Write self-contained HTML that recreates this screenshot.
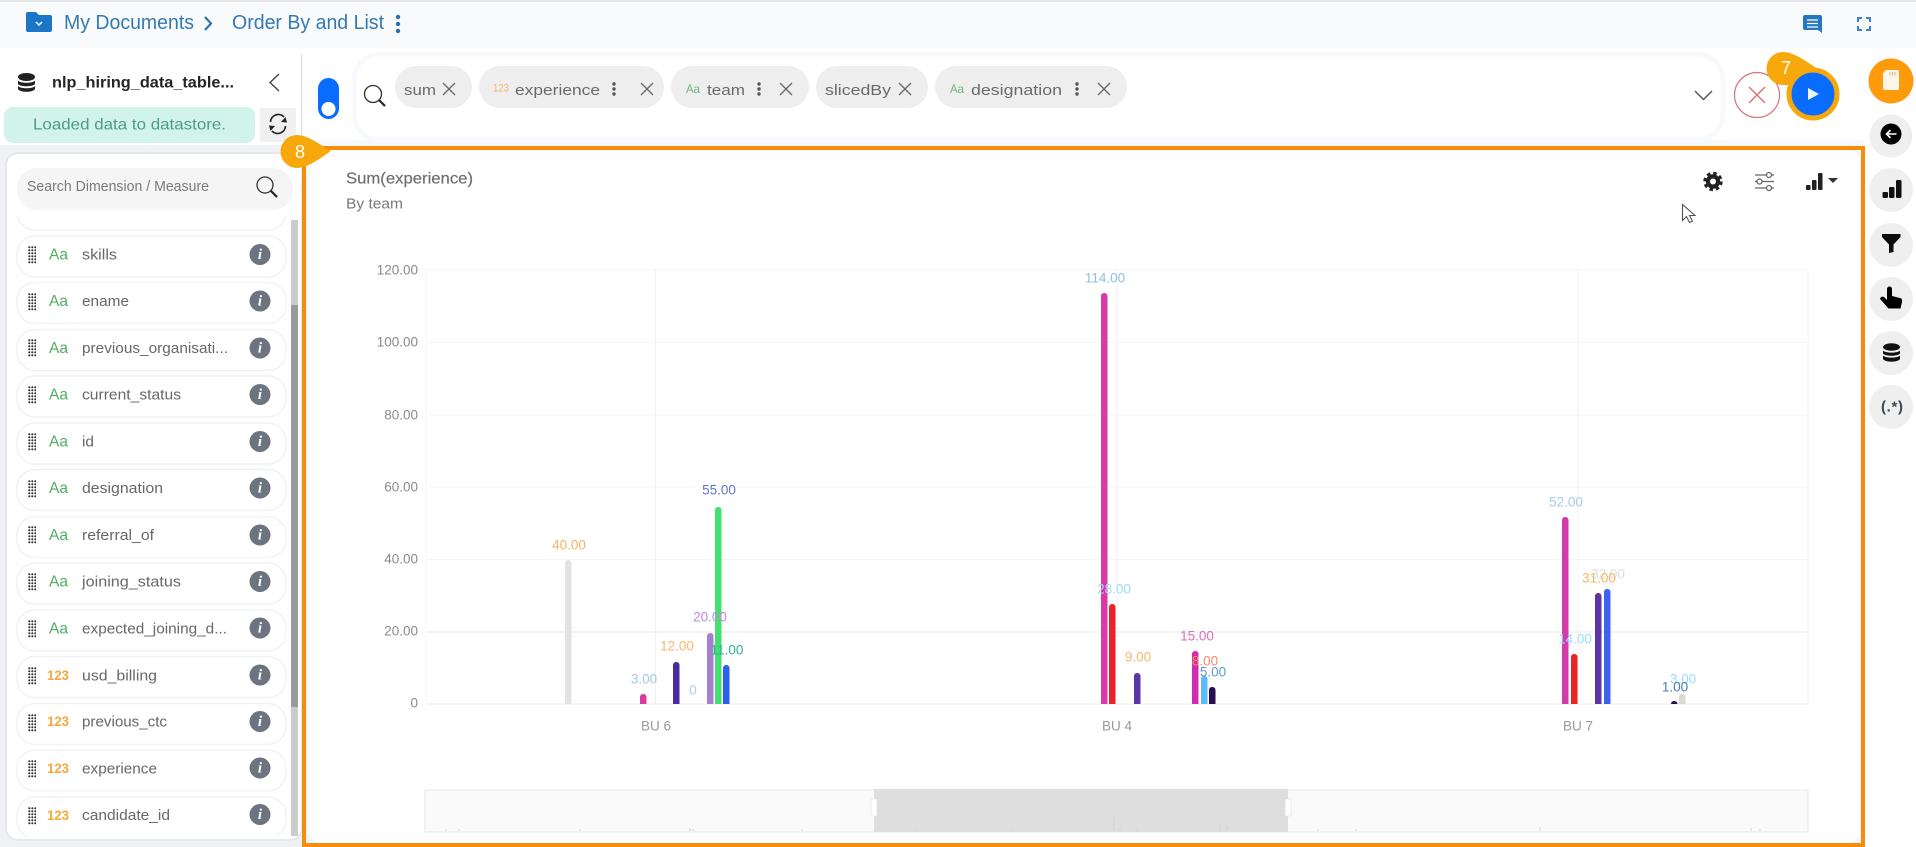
<!DOCTYPE html>
<html lang="en"><head><meta charset="utf-8"><title>Order By and List</title>
<style>
html,body{margin:0;padding:0;background:#fff;width:1916px;height:847px;overflow:hidden}
svg{display:block;filter:blur(.35px)}
text{font-family:"Liberation Sans",sans-serif;dominant-baseline:central}
.lab{font-size:13.5px;text-anchor:middle}
.ax{font-size:13.5px;fill:#8a8a8a;text-anchor:end}
.xl{font-size:13.5px;fill:#999;text-anchor:middle}
.rt{font-size:15px;fill:#676767}
.aa{font-size:16px;fill:#4fae62}
.n{font-size:14px;font-weight:700;fill:#f5a83a}
.ch{font-size:15px;fill:#6a6a6a}
.row{fill:#fff;stroke:#f1f2f4;stroke-width:1.5}
</style></head><body>
<svg width="1916" height="847" viewBox="0 0 1916 847" xmlns="http://www.w3.org/2000/svg">
<defs>
<clipPath id="plot"><rect x="420" y="200" width="1400" height="504"/></clipPath>
<clipPath id="list"><rect x="10" y="216" width="280" height="620"/></clipPath>
<pattern id="dots" width="3" height="3" patternUnits="userSpaceOnUse"><circle cx="1.3" cy="1.3" r="1.05" fill="#2e2e2e"/></pattern>
<g id="info"><circle cx="0" cy="0" r="10.5" fill="#6b747f"/><text x="0" y="0.5" text-anchor="middle" style="font-size:15px;font-weight:700;font-style:italic;font-family:'Liberation Serif',serif" fill="#fff">i</text></g>
<path id="x" d="M-6 -6L6 6M6 -6L-6 6" stroke="#666" stroke-width="1.3" fill="none"/>
<g id="keb"><circle cx="0" cy="-5" r="1.7" fill="#555"/><circle cx="0" cy="0" r="1.7" fill="#555"/><circle cx="0" cy="5" r="1.7" fill="#555"/></g>
<rect id="drag" x="0" y="0" width="8" height="18" fill="url(#dots)"/>
</defs>

<rect width="1916" height="847" fill="#fff"/>
<!-- top bar -->
<rect width="1916" height="48" fill="#f9fafb"/>
<rect width="1916" height="2" fill="#e3e4e6"/>
<path d="M28 12h8l3 3h11a2 2 0 0 1 2 2v13a2 2 0 0 1-2 2H28a2 2 0 0 1-2-2V14a2 2 0 0 1 2-2z" fill="#1a76c6"/>
<path d="M36 22l3 3 3-3" stroke="#fff" stroke-width="1.5" fill="none"/>
<text x="64" y="23" style="font-size:20px" fill="#3579b3" textLength="130" lengthAdjust="spacingAndGlyphs">My Documents</text>
<path d="M205 17l6 6.5-6 6.5" stroke="#2d72ad" stroke-width="2.2" fill="none"/>
<text x="232" y="23" style="font-size:20px" fill="#3579b3" textLength="152" lengthAdjust="spacingAndGlyphs">Order By and List</text>
<circle cx="398" cy="17" r="2.2" fill="#2a6fa8"/><circle cx="398" cy="24" r="2.2" fill="#2a6fa8"/><circle cx="398" cy="31" r="2.2" fill="#2a6fa8"/>
<path d="M1805 15h15a2 2 0 0 1 2 2v13.500l0 2.500-4-3h-13a2 2 0 0 1-2-2V17a2 2 0 0 1 2-2z" fill="#2578bd"/>
<path d="M1807 20h11M1807 23.500h11M1807 27h11" stroke="#fff" stroke-width="1.3"/>
<path d="M1858 22v-4h4M1866 18h4v4M1870 26v4h-4M1862 30h-4v-4" stroke="#3a80bf" stroke-width="2" fill="none"/>

<!-- left header -->
<rect x="301" y="54" width="1.2" height="92" fill="#dedede"/>
<g fill="#222"><ellipse cx="26.500" cy="77" rx="8.500" ry="4"/><path d="M18 80.500c2 3 15 3 17 0v3.500c-2 3-15 3-17 0z"/><path d="M18 86c2 3 15 3 17 0v3c-2 3.800-15 3.800-17 0z"/></g>
<text x="52" y="83" style="font-size:16px;font-weight:700" fill="#252525" textLength="182" lengthAdjust="spacingAndGlyphs">nlp_hiring_data_table...</text>
<path d="M279 74l-9 8.500 9 8.500" stroke="#444" stroke-width="1.4" fill="none"/>
<rect x="4" y="107" width="251" height="36" rx="9" fill="#d2f3e9"/>
<text x="33" y="125" style="font-size:16px" fill="#4f9c84" textLength="193" lengthAdjust="spacingAndGlyphs">Loaded data to datastore.</text>
<rect x="260" y="108" width="36" height="34" fill="#f0f0f0"/>
<path d="M270.500 122a7.800 7.800 0 0 1 13.500-5M285.500 126a7.800 7.800 0 0 1-13.500 5" stroke="#222" stroke-width="1.7" fill="none"/>
<path d="M287 122.500l-6-.5 4.500-5zM269 125.500l6 .5-4.500 5z" fill="#222"/>

<!-- query bar -->
<rect x="314" y="140" width="1550" height="8" fill="#f7f8fb"/>
<rect x="354" y="54" width="1369" height="86" rx="26" fill="#fff" stroke="#f7f9fc" stroke-width="5"/>
<rect x="318" y="78" width="21" height="41" rx="10.500" fill="#0a6cff"/>
<circle cx="328.500" cy="109" r="7" fill="#fff"/>
<circle cx="373" cy="94" r="8.500" fill="none" stroke="#333" stroke-width="1.3"/>
<path d="M379 100l6 6" stroke="#222" stroke-width="2.200"/>

<g fill="#eeeeee">
<rect x="395" y="66" width="77" height="42" rx="21"/>
<rect x="479" y="66" width="185" height="42" rx="21"/>
<rect x="671" y="66" width="138" height="42" rx="21"/>
<rect x="816" y="66" width="112" height="42" rx="21"/>
<rect x="935" y="66" width="192" height="42" rx="21"/>
</g>
<text class="ch" x="404" y="90.500" textLength="32" lengthAdjust="spacingAndGlyphs">sum</text>
<use href="#x" x="449" y="89"/>
<text x="493" y="88.500" style="font-size:11px" fill="#f5b56a" textLength="16" lengthAdjust="spacingAndGlyphs">123</text>
<text class="ch" x="515" y="90.500" textLength="85" lengthAdjust="spacingAndGlyphs">experience</text>
<use href="#keb" x="614" y="89"/><use href="#x" x="647" y="89"/>
<text x="686" y="89" style="font-size:12px" fill="#74b184" textLength="14" lengthAdjust="spacingAndGlyphs">Aa</text>
<text class="ch" x="707" y="90.500" textLength="38" lengthAdjust="spacingAndGlyphs">team</text>
<use href="#keb" x="759" y="89"/><use href="#x" x="786" y="89"/>
<text class="ch" x="825" y="90.500" textLength="66" lengthAdjust="spacingAndGlyphs">slicedBy</text>
<use href="#x" x="905" y="89"/>
<text x="950" y="89" style="font-size:12px" fill="#74b184" textLength="14" lengthAdjust="spacingAndGlyphs">Aa</text>
<text class="ch" x="971" y="90.500" textLength="91" lengthAdjust="spacingAndGlyphs">designation</text>
<use href="#keb" x="1077" y="89"/><use href="#x" x="1104" y="89"/>
<path d="M1695 91l8.500 8.500 8.500-8.500" stroke="#555" stroke-width="1.400" fill="none"/>

<!-- cancel and run -->
<circle cx="1757" cy="95" r="22.500" fill="#fff" stroke="#d9757c" stroke-width="1.200"/>
<path d="M1749 87l16 16M1765 87l-16 16" stroke="#d9757c" stroke-width="1.500"/>
<path d="M1783 52C1795 52 1810 64 1822 72L1800 82C1795 85 1790 85 1783 85A16.500 16.500 0 0 1 1783 52Z" fill="#f7a90b"/>
<circle cx="1813" cy="94" r="24" fill="#0a6cff" stroke="#f7a90b" stroke-width="5"/>
<path d="M1808 88v12l11-6z" fill="#eef5ff"/>
<text x="1786" y="68" text-anchor="middle" style="font-size:18px" fill="#fff">7</text>

<!-- left panel -->
<rect x="0" y="145" width="303" height="702" fill="#f0f1f5"/>
<rect x="6" y="153" width="296" height="687" rx="12" fill="#fff" stroke="#e0e2ea" stroke-width="1.500"/>
<rect x="17" y="168" width="276" height="42" rx="20" fill="#f5f5f5"/>
<text x="27" y="187" style="font-size:14.500px" fill="#7a7a7a" textLength="182" lengthAdjust="spacingAndGlyphs">Search Dimension / Measure</text>
<circle cx="265" cy="185" r="8" fill="none" stroke="#333" stroke-width="1.300"/>
<path d="M271 191l6 6" stroke="#222" stroke-width="2.200"/>
<rect x="291" y="220" width="7" height="616" fill="#cccccc"/>
<rect x="291" y="305" width="7" height="402" fill="#9a9a9a"/>

<g clip-path="url(#list)">
<rect class="row" x="17" y="189" width="269" height="41" rx="18"/>
<rect class="row" x="17" y="236" width="269" height="41" rx="18"/>
<rect class="row" x="17" y="282.500" width="269" height="41" rx="18"/>
<rect class="row" x="17" y="329.500" width="269" height="41" rx="18"/>
<rect class="row" x="17" y="376" width="269" height="41" rx="18"/>
<rect class="row" x="17" y="423" width="269" height="41" rx="18"/>
<rect class="row" x="17" y="469.500" width="269" height="41" rx="18"/>
<rect class="row" x="17" y="516.500" width="269" height="41" rx="18"/>
<rect class="row" x="17" y="563" width="269" height="41" rx="18"/>
<rect class="row" x="17" y="610" width="269" height="41" rx="18"/>
<rect class="row" x="17" y="656.500" width="269" height="41" rx="18"/>
<rect class="row" x="17" y="703.500" width="269" height="41" rx="18"/>
<rect class="row" x="17" y="750" width="269" height="41" rx="18"/>
<rect class="row" x="17" y="797" width="269" height="41" rx="18"/>
</g>
<use href="#drag" x="28" y="246"/><use href="#drag" x="28" y="293"/><use href="#drag" x="28" y="339"/><use href="#drag" x="28" y="386"/><use href="#drag" x="28" y="433"/><use href="#drag" x="28" y="480"/><use href="#drag" x="28" y="526"/><use href="#drag" x="28" y="573"/><use href="#drag" x="28" y="620"/><use href="#drag" x="28" y="667"/><use href="#drag" x="28" y="714"/><use href="#drag" x="28" y="760"/><use href="#drag" x="28" y="807"/>
<text class="aa" x="49" y="255" textLength="19" lengthAdjust="spacingAndGlyphs">Aa</text><text class="rt" x="82" y="255" textLength="35" lengthAdjust="spacingAndGlyphs">skills</text><use href="#info" x="260" y="254.500"/>
<text class="aa" x="49" y="301.500" textLength="19" lengthAdjust="spacingAndGlyphs">Aa</text><text class="rt" x="82" y="301.500" textLength="47" lengthAdjust="spacingAndGlyphs">ename</text><use href="#info" x="260" y="301"/>
<text class="aa" x="49" y="348.500" textLength="19" lengthAdjust="spacingAndGlyphs">Aa</text><text class="rt" x="82" y="348.500" textLength="146" lengthAdjust="spacingAndGlyphs">previous_organisati...</text><use href="#info" x="260" y="348"/>
<text class="aa" x="49" y="395" textLength="19" lengthAdjust="spacingAndGlyphs">Aa</text><text class="rt" x="82" y="395" textLength="99" lengthAdjust="spacingAndGlyphs">current_status</text><use href="#info" x="260" y="394.500"/>
<text class="aa" x="49" y="442" textLength="19" lengthAdjust="spacingAndGlyphs">Aa</text><text class="rt" x="82" y="442" textLength="12" lengthAdjust="spacingAndGlyphs">id</text><use href="#info" x="260" y="441.500"/>
<text class="aa" x="49" y="488.500" textLength="19" lengthAdjust="spacingAndGlyphs">Aa</text><text class="rt" x="82" y="488.500" textLength="81" lengthAdjust="spacingAndGlyphs">designation</text><use href="#info" x="260" y="488"/>
<text class="aa" x="49" y="535.500" textLength="19" lengthAdjust="spacingAndGlyphs">Aa</text><text class="rt" x="82" y="535.500" textLength="72" lengthAdjust="spacingAndGlyphs">referral_of</text><use href="#info" x="260" y="535"/>
<text class="aa" x="49" y="582" textLength="19" lengthAdjust="spacingAndGlyphs">Aa</text><text class="rt" x="82" y="582" textLength="99" lengthAdjust="spacingAndGlyphs">joining_status</text><use href="#info" x="260" y="581.500"/>
<text class="aa" x="49" y="629" textLength="19" lengthAdjust="spacingAndGlyphs">Aa</text><text class="rt" x="82" y="629" textLength="145" lengthAdjust="spacingAndGlyphs">expected_joining_d...</text><use href="#info" x="260" y="628"/>
<text class="n" x="47" y="675" textLength="22" lengthAdjust="spacingAndGlyphs">123</text><text class="rt" x="82" y="676" textLength="75" lengthAdjust="spacingAndGlyphs">usd_billing</text><use href="#info" x="260" y="675"/>
<text class="n" x="47" y="721" textLength="22" lengthAdjust="spacingAndGlyphs">123</text><text class="rt" x="82" y="722" textLength="85" lengthAdjust="spacingAndGlyphs">previous_ctc</text><use href="#info" x="260" y="721.500"/>
<text class="n" x="47" y="768" textLength="22" lengthAdjust="spacingAndGlyphs">123</text><text class="rt" x="82" y="769" textLength="75" lengthAdjust="spacingAndGlyphs">experience</text><use href="#info" x="260" y="768"/>
<text class="n" x="47" y="815" textLength="22" lengthAdjust="spacingAndGlyphs">123</text><text class="rt" x="82" y="815.500" textLength="88" lengthAdjust="spacingAndGlyphs">candidate_id</text><use href="#info" x="260" y="814.500"/>

<!-- chart frame -->
<rect x="304" y="148" width="1559" height="697" fill="#f3f5f9" stroke="#f58c0c" stroke-width="4"/>
<rect x="309" y="150" width="1551" height="693" rx="12" fill="#fff"/>
<path d="M297 135C308 135 322 146 331 151C322 157 308 168 297 168A16.500 16.500 0 0 1 297 135Z" fill="#f7a90b"/>
<text x="300" y="152" text-anchor="middle" style="font-size:18px" fill="#fff">8</text>
<text x="346" y="179" style="font-size:16px" fill="#6f6f6f" stroke="#6f6f6f" stroke-width=".2" textLength="127" lengthAdjust="spacingAndGlyphs">Sum(experience)</text>
<text x="346" y="204" style="font-size:15px" fill="#777" textLength="57" lengthAdjust="spacingAndGlyphs">By team</text>

<!-- chart toolbar -->
<circle cx="1713" cy="181.500" r="7.200" fill="#222"/>
<circle cx="1713" cy="181.500" r="8.300" fill="none" stroke="#222" stroke-width="2.800" stroke-dasharray="3.500 3.020"/>
<circle cx="1713" cy="181.500" r="3" fill="#fff"/>
<path d="M1755 175h19M1755 181.500h19M1755 188h19" stroke="#666" stroke-width="1.300"/>
<g fill="#fff" stroke="#666" stroke-width="1.300"><circle cx="1769" cy="175" r="2.500"/><circle cx="1759.500" cy="181.500" r="2.500"/><circle cx="1769" cy="188" r="2.500"/></g>
<g fill="#222"><rect x="1806" y="185" width="4.500" height="5" rx="1"/><rect x="1812" y="180" width="4.500" height="10" rx="1"/><rect x="1818" y="173" width="4.500" height="17" rx="1"/></g>
<path d="M1828 178h10l-5 5z" fill="#333"/>
<path d="M1682.500 204.500v16l4-4 3 6 3-1.500-3-5.500h5.500z" fill="#fff" stroke="#555" stroke-width="1.100"/>

<!-- grid -->
<g stroke="#f5f5f5" stroke-width="1">
<path d="M426 270H1808M426 342.500H1808M426 415H1808M426 487H1808M426 559.500H1808"/>
<path d="M426 270V704M1808 270V704"/>
</g>
<path d="M655.500 270V704M1117 270V704M1578 270V704" stroke="#f0f0f0" stroke-width="1"/>
<path d="M426 632H1808" stroke="#f0f0f0" stroke-width="1.500"/>
<path d="M426 704H1808" stroke="#ebebeb" stroke-width="1"/>
<text class="ax" x="418" y="270">120.00</text>
<text class="ax" x="418" y="342">100.00</text>
<text class="ax" x="418" y="415">80.00</text>
<text class="ax" x="418" y="487">60.00</text>
<text class="ax" x="418" y="559">40.00</text>
<text class="ax" x="418" y="631">20.00</text>
<text class="ax" x="418" y="703">0</text>
<text class="xl" x="656" y="726">BU 6</text>
<text class="xl" x="1117" y="726">BU 4</text>
<text class="xl" x="1578" y="726">BU 7</text>

<!-- bars -->
<g clip-path="url(#plot)">
<rect x="565" y="560" width="6.500" height="150" rx="3" fill="#e2e2e2"/>
<rect x="640" y="694" width="6.500" height="20" rx="3" fill="#d93a9f"/>
<rect x="673" y="662" width="6.500" height="50" rx="3" fill="#4b2ca0"/>
<rect x="707" y="633" width="6.500" height="80" rx="3" fill="#a77fd0"/>
<rect x="715" y="507" width="6.500" height="205" rx="3" fill="#43e070"/>
<rect x="723" y="665" width="6.500" height="50" rx="3" fill="#2a5ff0"/>
<rect x="1101" y="293" width="6.500" height="420" rx="3" fill="#d93aa8"/>
<rect x="1109" y="604" width="6.500" height="110" rx="3" fill="#e82424"/>
<rect x="1134" y="673" width="6.500" height="40" rx="3" fill="#5a35a8"/>
<rect x="1192" y="651" width="6.500" height="60" rx="3" fill="#d02cb0"/>
<rect x="1201" y="676" width="6.500" height="40" rx="3" fill="#5cb8ff"/>
<rect x="1209" y="687" width="6.500" height="30" rx="3" fill="#2a0e50"/>
<rect x="1562" y="517" width="6.500" height="200" rx="3" fill="#d23ba8"/>
<rect x="1571" y="654" width="6.500" height="60" rx="3" fill="#e82424"/>
<rect x="1595" y="593" width="6.500" height="120" rx="3" fill="#5a35a8"/>
<rect x="1604" y="589" width="6.500" height="120" rx="3" fill="#3a63f0"/>
<rect x="1671" y="701" width="6.500" height="20" rx="3" fill="#2a0e50"/>
<rect x="1679" y="694" width="6.500" height="20" rx="3" fill="#d8dbd0"/>
</g>

<!-- data labels -->
<text class="lab" x="569" y="545" fill="#f5b55f">40.00</text>
<text class="lab" x="644" y="679" fill="#a5c8e4">3.00</text>
<text class="lab" x="677" y="646" fill="#f9b769">12.00</text>
<text class="lab" x="693" y="690" fill="#b0cfe8">0</text>
<text class="lab" x="710" y="617" fill="#c088e0">20.00</text>
<text class="lab" x="719" y="490" fill="#5b78cc">55.00</text>
<text class="lab" x="727" y="650" fill="#2ab090">11.00</text>
<text class="lab" x="1105" y="278" fill="#90c0e0">114.00</text>
<text class="lab" x="1114" y="589" fill="#9adcff">28.00</text>
<text class="lab" x="1138" y="657" fill="#f9b769">9.00</text>
<text class="lab" x="1197" y="636" fill="#e06bb5">15.00</text>
<text class="lab" x="1205" y="661" fill="#f88a60">8.00</text>
<text class="lab" x="1213" y="672" fill="#5b9bd0">5.00</text>
<text class="lab" x="1566" y="502" fill="#a5cce8">52.00</text>
<text class="lab" x="1575" y="639" fill="#9adcff">14.00</text>
<text class="lab" x="1608" y="574" fill="#dddddd">32.00</text>
<text class="lab" x="1599" y="578" fill="#f5b55f">31.00</text>
<text class="lab" x="1683" y="679" fill="#9adcff">3.00</text>
<text class="lab" x="1675" y="687" fill="#4a80b0">1.00</text>

<!-- data zoom -->
<rect x="425" y="790" width="1383" height="42" fill="#fafafa" stroke="#e6e6e6" stroke-width="1"/>
<rect x="874" y="789" width="414" height="43" fill="#dedede"/>
<rect x="871" y="799" width="6" height="17" rx="1" fill="#fff" stroke="#e2e2e2" stroke-width=".6"/>
<rect x="1285" y="799" width="6" height="17" rx="1" fill="#fff" stroke="#e2e2e2" stroke-width=".6"/>
<path d="M446 831v-2M459 831v-2M580 831v-2M690 831v-3M693 831v-2M802 831v-2M915 831v-2M1013 831v-2M1024 831v-2M1114 831v-14M1120 831v-3M1137 831v-2M1220 831v-7M1227 831v-5M1318 831v-2M1356 831v-2M1540 831v-4M1751 831v-3M1760 831v-2" stroke="#d6d0d6" stroke-width="1"/>

<!-- right rail -->
<rect x="1865" y="48" width="51" height="799" fill="#fff"/>
<circle cx="1891" cy="81" r="22.500" fill="#ff9a0a"/>
<path d="M1886 70h11a2 2 0 0 1 2 2v16a2 2 0 0 1-2 2h-12a2 2 0 0 1-2-2v-15z" fill="#fdf6ea"/>
<path d="M1890 72v3.500M1892.500 72v3.500M1895 72v3.500" stroke="#f2b066" stroke-width="1"/>
<circle cx="1891" cy="136" r="21.500" fill="#efefef"/>
<circle cx="1891" cy="134" r="10.500" fill="#000"/>
<path d="M1896.500 134h-10M1890.500 130l-4 4 4 4" stroke="#fff" stroke-width="1.600" fill="none"/>
<circle cx="1891" cy="190" r="22" fill="#efefef"/>
<g fill="#111"><rect x="1882.500" y="192" width="5.500" height="6" rx="1.200"/><rect x="1889" y="187" width="5.500" height="11" rx="1.200"/><rect x="1896" y="180" width="5.500" height="18" rx="1.200"/></g>
<circle cx="1891" cy="245" r="22" fill="#efefef"/>
<path d="M1882 234h18.500v3l-7 7.500v7.500l-4.500 1v-8.500l-7-7.500z" fill="#0c0c0c"/>
<circle cx="1891" cy="299" r="22" fill="#efefef"/>
<path d="M1887 289a2.500 2.500 0 0 1 5 0v7l8 2c2 .5 2.500 2 2 4l-1.500 6.500h-12l-8-9c-1.200-2 2-4 3.800-2.200l2.700 2.700z" fill="#000"/>
<circle cx="1891" cy="353" r="22" fill="#efefef"/>
<g fill="#111"><ellipse cx="1891.500" cy="347" rx="8.500" ry="3.800"/><path d="M1883 350.500c2 2.800 15 2.800 17 0v3c-2 3-15 3-17 0z"/><path d="M1883 355.500c2 2.800 15 2.800 17 0v3.500c-2 3.600-15 3.600-17 0z"/></g>
<circle cx="1891" cy="407" r="22" fill="#efefef"/>
<text x="1881" y="407" style="font-size:15px;font-weight:700" fill="#3c4654" textLength="22" lengthAdjust="spacing">(.*)</text>
</svg>
</body></html>
